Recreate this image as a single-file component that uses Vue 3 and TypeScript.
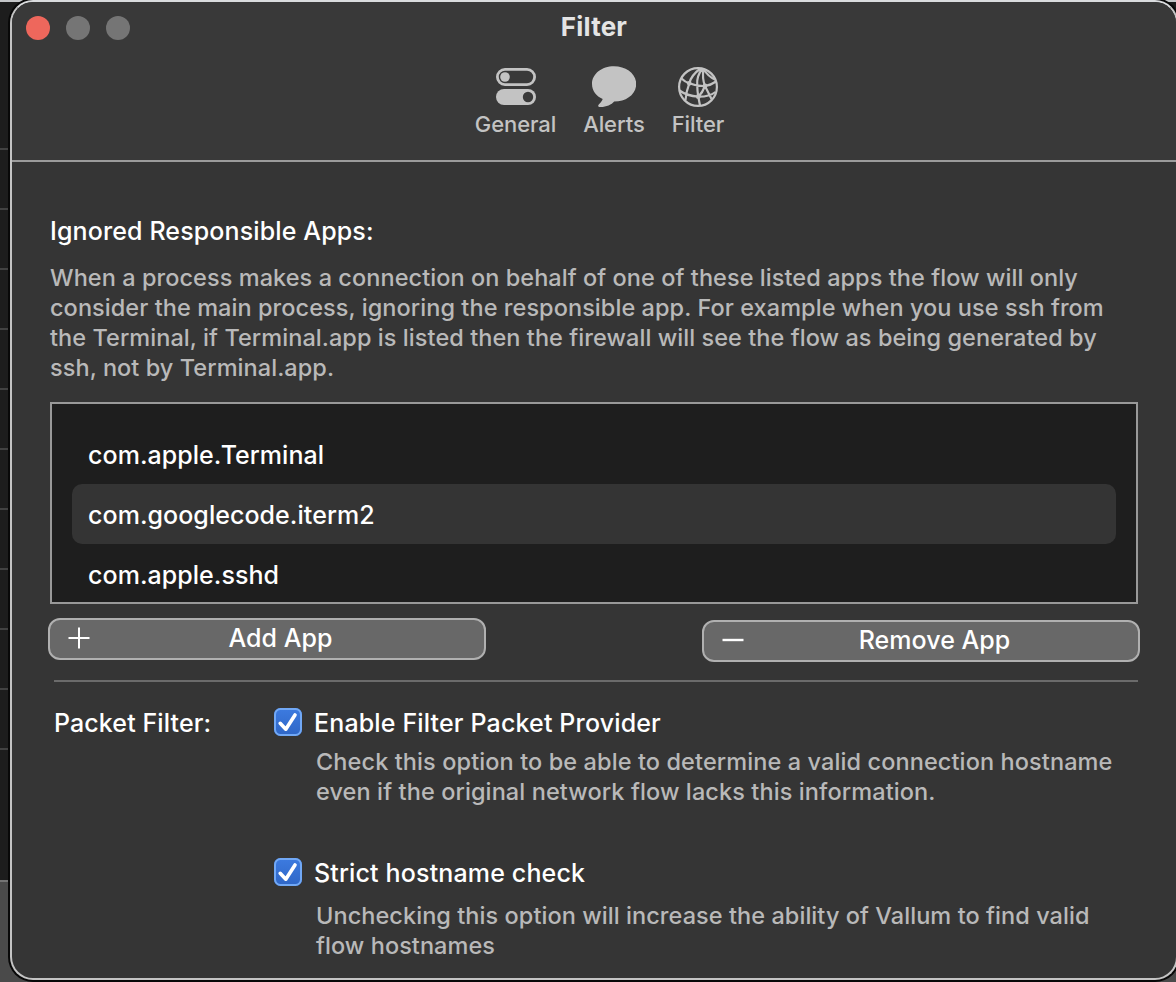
<script setup lang="ts">
import { ref } from 'vue'

interface FilterOption {
  label: string
  lines: string[]
  checked: boolean
}

const ignoredApps = ['com.apple.Terminal', 'com.googlecode.iterm2', 'com.apple.sshd']
const selected = ref(1)

const description = [
  'When a process makes a connection on behalf of one of these listed apps the flow will only',
  'consider the main process, ignoring the responsible app. For example when you use ssh from',
  'the Terminal, if Terminal.app is listed then the firewall will see the flow as being generated by',
  'ssh, not by Terminal.app.',
]

const options = ref<FilterOption[]>([
  {
    label: 'Enable Filter Packet Provider',
    lines: [
      'Check this option to be able to determine a valid connection hostname',
      'even if the original network flow lacks this information.',
    ],
    checked: true,
  },
  {
    label: 'Strict hostname check',
    lines: [
      'Unchecking this option will increase the ability of Vallum to find valid',
      'flow hostnames',
    ],
    checked: true,
  },
])
</script>

<template>
  <div class="desktop">
    <div class="backdrop"><div class="rows"></div></div>
    <main class="window">
      <header class="toolbar">
        <div class="lights">
          <span class="light close"></span><span class="light"></span><span class="light"></span>
        </div>
        <h1 class="title">Filter</h1>
        <nav class="tabs">
          <div class="tab general">
            <svg width="40" height="42" viewBox="0 0 40 42">
              <rect x="1.4" y="3.4" width="37.2" height="15.2" rx="7.6" fill="none" stroke="#c3c3c3" stroke-width="2.8" />
              <circle cx="9" cy="11" r="4.8" fill="#c3c3c3" />
              <rect x="0" y="23" width="40" height="16" rx="8" fill="#c3c3c3" />
              <circle cx="32" cy="31" r="5.2" fill="#393939" />
            </svg>
            <span>General</span>
          </div>
          <div class="tab alerts">
            <svg width="44" height="42" viewBox="0 0 44 42">
              <path
                d="M22 .2C34.4.2 44.2 7.8 44.2 18S34.6 35.6 22.2 35.6C19.6 38.8 13.8 41.3 8.2 41.1 5.9 41 5.5 39.6 7.2 38 8.7 36.600 9.900 35.100 10.700 33C4.200 30.200 0 24.600 0 18 0 7.800 9.800.2 22 .2Z"
                fill="#c3c3c3"
              />
            </svg>
            <span>Alerts</span>
          </div>
          <div class="tab filter">
            <svg width="42" height="42" viewBox="0 0 42 42" fill="none" stroke="#c3c3c3" stroke-width="2.2">
              <circle cx="21" cy="21" r="18.9" />
              <path
                d="M23.500 2.500C18 6.500 13.500 12 12.300 17.300C10.500 22 9 28 8.500 34M25.500 2.700C21 8 19.800 14 20.200 19C20.300 24 20.800 28 21.300 30.700L23 39.500M26.500 3C25.500 9 26 15 28 20C30 24 32.500 29 34.500 33M26.500 3C29 7 32 11 38 13.500M4.500 12.500C7 15 9.500 16.500 12.300 17.300C17.500 19.500 23 20.200 28 20C32 19.500 35.500 18 39 15.500M2.500 24.500C8 28.500 14 30.200 21.300 30.700C28 30.800 34 29.500 38.500 26M28 20C26.500 24 24.500 27.500 21.300 30.700"
              />
              <g fill="#c3c3c3" stroke="none">
                <circle cx="12.300" cy="17.300" r="2.400" />
                <circle cx="28" cy="20" r="2.400" />
                <circle cx="21.300" cy="30.700" r="2.400" />
              </g>
            </svg>
            <span>Filter</span>
          </div>
        </nav>
      </header>

      <section class="ignored">
        <h2 class="heading">Ignored Responsible Apps:</h2>
        <p class="note main-note">
          <span v-for="(line, i) in description" :key="i" class="line">{{ line }}</span>
        </p>
        <ul class="list">
          <li
            v-for="(app, i) in ignoredApps"
            :key="app"
            class="item"
            :class="{ selected: i === selected }"
            @click="selected = i"
          >{{ app }}</li>
        </ul>
        <div class="actions">
          <button class="btn">
            <svg width="22" height="22" viewBox="0 0 22 22"><path d="M.5 11h21M11 .5v21" stroke="#fff" stroke-width="2" /></svg>
            <span>Add App</span>
          </button>
          <button class="btn remove">
            <svg width="22" height="22" viewBox="0 0 22 22"><path d="M.5 11h21" stroke="#fff" stroke-width="2.400" /></svg>
            <span>Remove App</span>
          </button>
        </div>
      </section>

      <section class="packet">
        <h2 class="packet-title">Packet Filter:</h2>
        <div class="options">
          <div v-for="(opt, i) in options" :key="opt.label" class="option" :class="'o' + i">
            <div class="check-row" @click="opt.checked = !opt.checked">
              <span class="box">
                <svg v-if="opt.checked" width="28" height="28" viewBox="0 0 28 28">
                  <path d="M6.200 15.300L11.800 21.200L21 7" fill="none" stroke="#fff" stroke-width="3.600" stroke-linecap="round" stroke-linejoin="round" />
                </svg>
              </span>
              <span class="check-label">{{ opt.label }}</span>
            </div>
            <p class="note">
              <span v-for="(line, j) in opt.lines" :key="j" class="line">{{ line }}</span>
            </p>
          </div>
        </div>
      </section>
    </main>
  </div>
</template>

<style>
body {
  background: #000;
  overflow: hidden;
}
</style>

<style scoped>
* {
  box-sizing: border-box;
}
h1, h2, p, ul {
  margin: 0;
  padding: 0;
  font-weight: 500;
}
.desktop {
  position: relative;
  width: 1176px;
  height: 982px;
  overflow: hidden;
  background: linear-gradient(#c4c6c8 2px, #1d1d1d 2px);
  font-family: Inter, "Liberation Sans", sans-serif;
  font-weight: 500;
  color: #fff;
}
.backdrop {
  position: absolute;
  inset: 2px auto 0 0;
  width: 100%;
  background: linear-gradient(#1d1d1d 878px, #747474 878px, #747474 880px, #4a4a4a 880px);
}
.rows {
  height: 748px;
  background: repeating-linear-gradient(transparent 0 58px, #424242 58px 60px);
  background-position: 0 28px;
  background-repeat: no-repeat;
  clip-path: inset(140px 0 0 0);
}
.window {
  position: absolute;
  left: 10px;
  top: 0;
  width: 1168px;
  height: 980px;
  border: 2px solid #c4c4c4;
  border-top-color: #dadcde;
  border-radius: 23px;
  background: #353535;
  box-shadow: 0 0 0 2px #080808;
  overflow: hidden;
}
.toolbar {
  position: relative;
  height: 160px;
  background: #393939;
  border-bottom: 2px solid #9b9b9b;
}
.lights {
  position: absolute;
  left: 14px;
  top: 14px;
  display: flex;
  gap: 16px;
}
.light {
  width: 24px;
  height: 24px;
  border-radius: 50%;
  background: #757575;
}
.light.close {
  background: #ee675c;
}
.title {
  padding-top: 9px;
  line-height: 32px;
  font-size: 26px;
  font-weight: 700;
  text-align: center;
  letter-spacing: 0.2px;
  color: #e4e4e4;
}
.tabs {
  display: flex;
  justify-content: center;
  padding: 23px 0 0 11px;
  gap: 27px;
  color: #c3c3c3;
}
.tab {
  display: flex;
  flex-direction: column;
  align-items: center;
  font-size: 22px;
  line-height: 28px;
  gap: 2px;
  letter-spacing: -0.1px;
}
.ignored {
  padding: 53px 38px 0 38px;
}
.heading {
  font-size: 25px;
  line-height: 32px;
  letter-spacing: 0.120px;
}
.note {
  font-size: 23.500px;
  line-height: 30px;
  letter-spacing: 0.060px;
  color: #b9b9b9;
}
.main-note {
  margin-top: 16px;
}
.line {
  display: block;
  white-space: nowrap;
}
.list {
  list-style: none;
  margin-top: 19px;
  width: 1088px;
  height: 202px;
  padding: 20px;
  border: 2px solid #999;
  background: #1e1e1e;
  overflow: hidden;
}
.item {
  height: 60px;
  padding-left: 16px;
  border-radius: 10px;
  font-size: 25px;
  line-height: 62px;
  letter-spacing: 0.050px;
}
.item.selected {
  background: #343434;
}
.actions {
  display: flex;
  justify-content: space-between;
  width: 1092px;
  margin: 14px 0 0 -2px;
  align-items: flex-start;
}
.btn {
  display: grid;
  grid-template-columns: 22px 1fr;
  align-items: center;
  width: 438px;
  height: 42px;
  padding: 0 0 3px 18px;
  border: 2px solid #b0b0b0;
  border-radius: 12px;
  background: #686868;
  color: #fff;
  font: 500 25px Inter, "Liberation Sans", sans-serif;
  letter-spacing: 0.050px;
}
.btn span {
  padding-right: 13px;
}
.btn.remove {
  margin-top: 2px;
}
.packet {
  display: flex;
  width: 1084px;
  margin: 18px 0 0 42px;
  border-top: 2px solid #6b6b6b;
}
.packet-title {
  width: 220px;
  padding-top: 25px;
  font-size: 25px;
  line-height: 32px;
  letter-spacing: 0.100px;
}
.option {
  height: 150px;
  padding-top: 26px;
}
.check-row {
  display: flex;
  align-items: center;
  gap: 12px;
  height: 28px;
}
.box {
  width: 28px;
  height: 28px;
  border-radius: 6.500px;
  background: linear-gradient(#3d7be0, #2f66c6);
  box-shadow: inset 0 0 0 2px #71a8f5;
}
.box svg {
  display: block;
}
.check-label {
  font-size: 25px;
  line-height: 32px;
  letter-spacing: 0.150px;
  padding-top: 2px;
  white-space: nowrap;
}
.option .note {
  margin: 11px 0 0 42px;
}
.option.o0 .note {
  letter-spacing: 0.100px;
}
.option.o1 .note {
  margin-top: 15px;
}
</style>
